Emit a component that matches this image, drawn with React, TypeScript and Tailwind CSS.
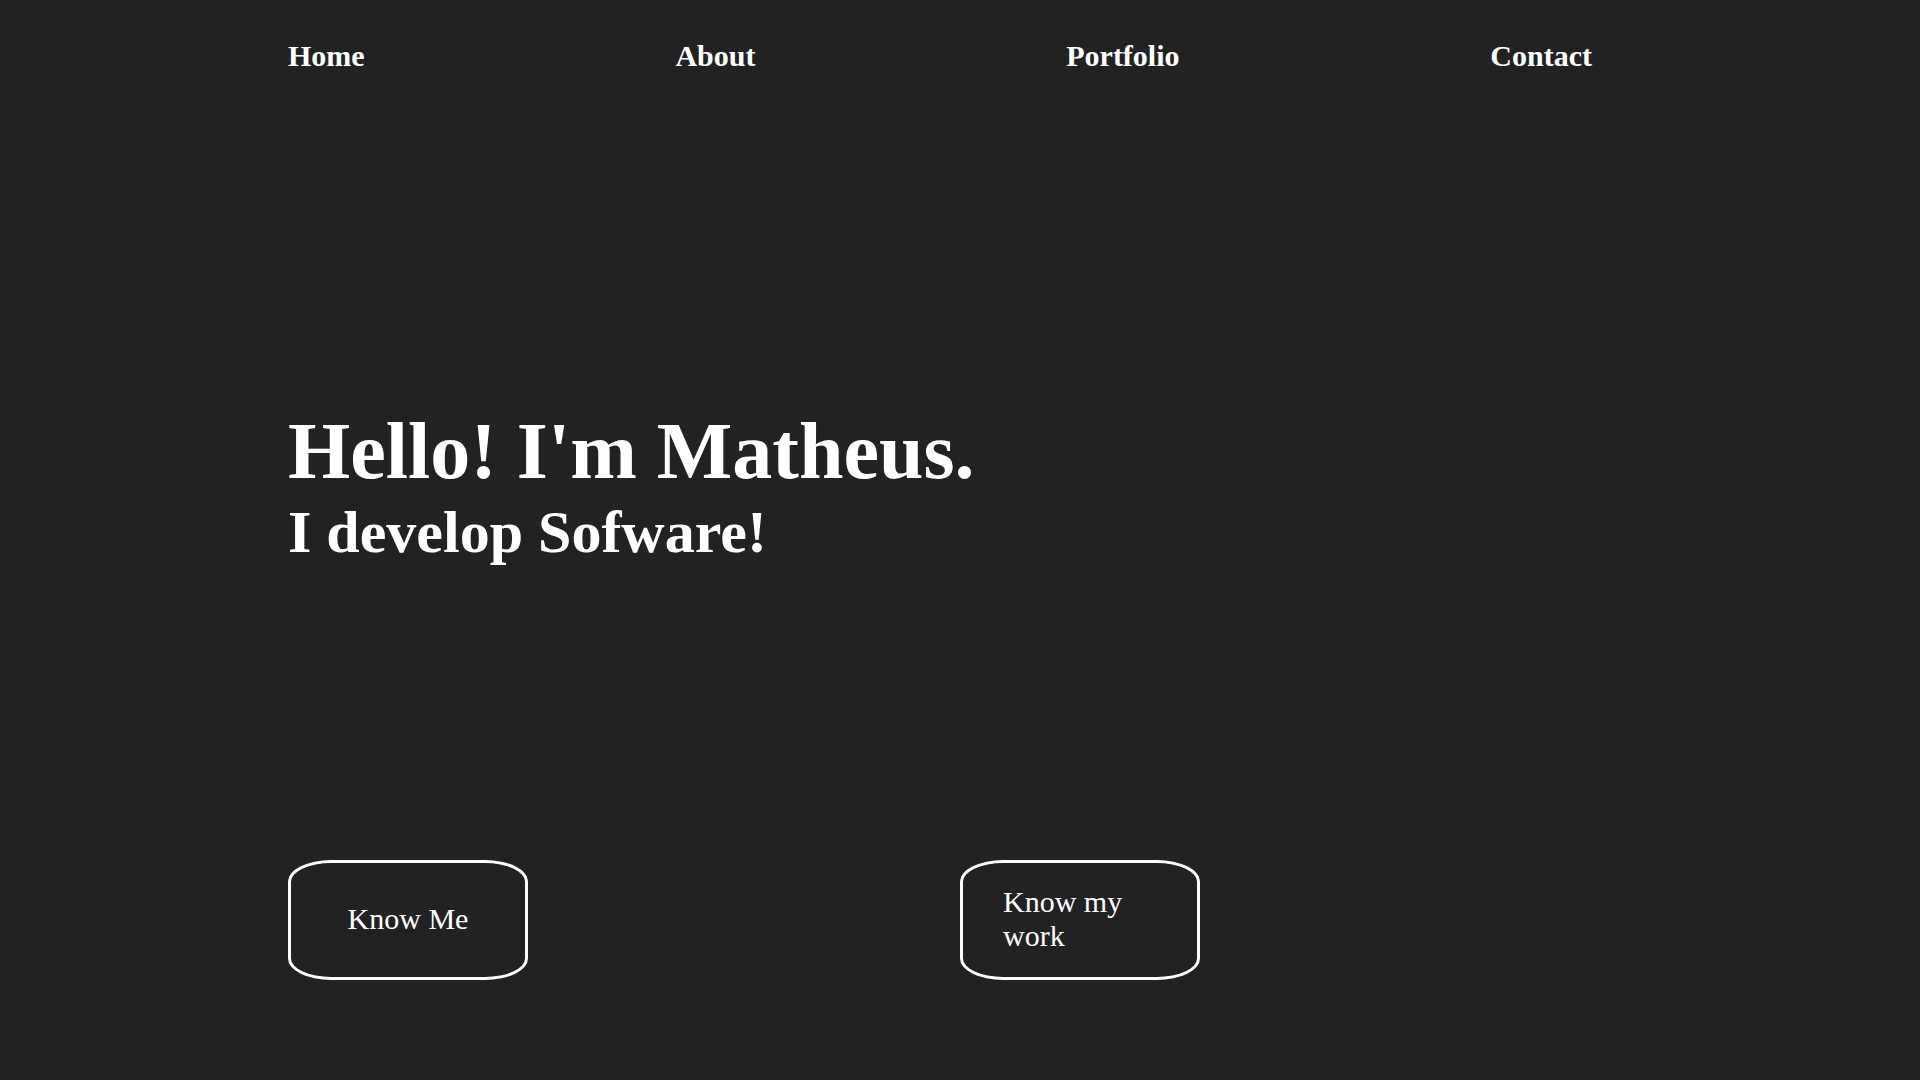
import React from "react";

export default function App() {
  const links = ["Home", "About", "Portfolio", "Contact"];
  return (
    <div className="min-h-screen w-full bg-[#222222] text-white font-['Liberation_Serif','Times_New_Roman',serif]">
      <nav className="flex justify-between pl-[288px] pr-[328px] pt-[41px]">
        {links.map((l) => (
          <a key={l} href="#" className="text-[30px] font-bold leading-none text-white">
            {l}
          </a>
        ))}
      </nav>
      <section className="pl-[288px] pt-[340px]">
        <h1 className="text-[80px] font-bold leading-none">Hello! I'm Matheus.</h1>
        <h2 className="mt-[11px] text-[60px] font-bold leading-none">I develop Sofware!</h2>
      </section>
      <div className="grid grid-cols-2 pl-[288px] pr-[288px] pt-[298px]">
        <div>
          <a
            href="#"
            className="flex h-[120px] w-[240px] items-center justify-center rounded-[18%] border-[3px] border-white px-[40px] pb-[2px] text-[30px] leading-[normal] text-white"
          >
            Know Me
          </a>
        </div>
        <div>
          <a
            href="#"
            className="flex h-[120px] w-[240px] items-center justify-center rounded-[18%] border-[3px] border-white px-[40px] pb-[2px] text-[30px] leading-[normal] text-white"
          >
            Know my work
          </a>
        </div>
      </div>
    </div>
  );
}
